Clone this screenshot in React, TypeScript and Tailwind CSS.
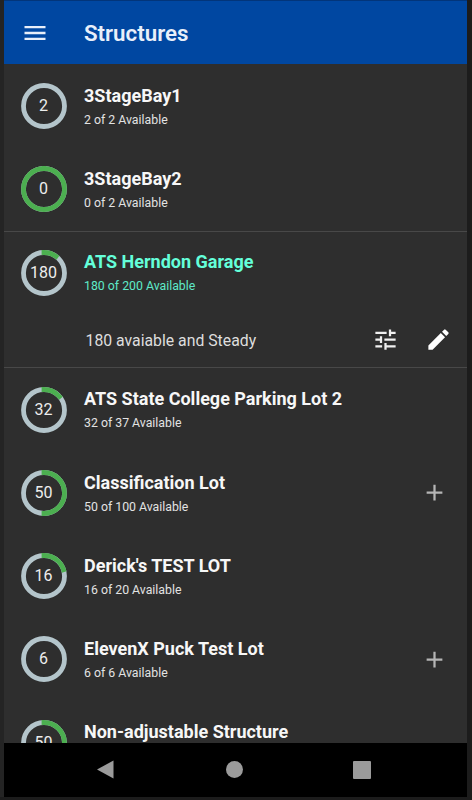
import React, { FC } from 'react';
import { MdAdd, MdEdit, MdMenu, MdTune } from 'react-icons/md';

interface StructureProps {
  name: string;
  available: number;
  total: number;
  adjustable?: boolean;
  status?: string;
}

const structures: StructureProps[] = [
  { name: '3StageBay1', available: 2, total: 2 },
  { name: '3StageBay2', available: 0, total: 2 },
  {
    name: 'ATS Herndon Garage',
    available: 180,
    total: 200,
    status: '180 avaiable and Steady',
  },
  { name: 'ATS State College Parking Lot 2', available: 32, total: 37 },
  { name: 'Classification Lot', available: 50, total: 100, adjustable: true },
  { name: "Derick's TEST LOT", available: 16, total: 20 },
  { name: 'ElevenX Puck Test Lot', available: 6, total: 6, adjustable: true },
  { name: 'Non-adjustable Structure', available: 50, total: 100 },
];

const OccupancyRing: FC<{ available: number; total: number }> = ({ available, total }) => {
  const used = ((total - available) / total) * 100;

  return (
    <div className="relative size-[46px] shrink-0">
      <svg viewBox="0 0 46 46" className="size-full -rotate-90" fill="none" strokeWidth="4.8">
        <circle cx="23" cy="23" r="20.5" stroke="#b4c5cb" />
        {used > 0 && (
          <circle
            cx="23"
            cy="23"
            r="20.5"
            stroke="#4caf50"
            strokeLinecap="square"
            pathLength="100"
            strokeDasharray={`${used} 100`}
          />
        )}
      </svg>
      <span className="absolute inset-0 flex items-center justify-center text-[16px] text-[#ededed]">
        {available}
      </span>
    </div>
  );
};

const StructureItem: FC<StructureProps> = ({ name, available, total, adjustable, status }) => {
  return (
    <li className={status ? 'border-y border-[#484848]' : ''}>
      <div
        className={`flex items-center pl-[16.5px] pr-[19px] ${status ? 'h-[82.3px]' : 'h-[83.3px]'}`}
      >
        <OccupancyRing available={available} total={total} />
        <div
          className={`ml-[17.5px] flex-1 ${status ? 'pt-[1px] text-[#64ffda]' : 'pt-[2.5px] text-[#f7f7f7]'}`}
        >
          <h3 className="text-[18px] leading-[24px] font-bold">{name}</h3>
          <p className="mt-[1px] text-[12.3px] leading-[22px] opacity-90">
            {available} of {total} Available
          </p>
        </div>
        {adjustable && <MdAdd className="size-[27px] text-[#b5b5b5]" />}
      </div>
      {status && (
        <div className="flex h-[52.6px] items-center pr-[15px] pl-[81.5px] text-white">
          <p className="flex-1 text-[15.8px] text-[#dedede]">{status}</p>
          <MdTune className="mr-[26.5px] mb-[3px] size-[27px] text-[#f0f0f0]" />
          <MdEdit className="mb-[3px] size-[27px]" />
        </div>
      )}
    </li>
  );
};

const App: FC = () => {
  return (
    <div className="h-[800px] w-[472px] overflow-hidden bg-[#1c1c1c] pr-[5px] font-['Roboto',sans-serif]">
      <div className="flex h-[797px] flex-col border-l-4 border-[#242424] bg-[#2e2e2e]">
        <header className="flex h-[64.4px] shrink-0 items-center border-t border-[#02357a] bg-[#0047a1] pl-[17px] text-[#e8effa]">
          <MdMenu className="size-[28px]" />
          <h1 className="ml-[35px] pt-[2px] text-[22.3px] font-semibold">Structures</h1>
        </header>
        <ul className="min-h-0 flex-1 overflow-hidden">
          {structures.map((item) => (
            <StructureItem key={item.name} {...item} />
          ))}
        </ul>
        <nav className="flex h-[54px] shrink-0 items-center bg-black pb-[1px] pl-[92px]">
          <svg width="18" height="19" viewBox="0 0 18 19" fill="#9b9b9b">
            <path d="M1 9.5 17.5.5v18z" />
          </svg>
          <div className="ml-[112px] size-[17px] rounded-full bg-[#9b9b9b]" />
          <div className="ml-[110px] size-[18px] rounded-[1px] bg-[#9b9b9b]" />
        </nav>
      </div>
    </div>
  );
};

export default App;
